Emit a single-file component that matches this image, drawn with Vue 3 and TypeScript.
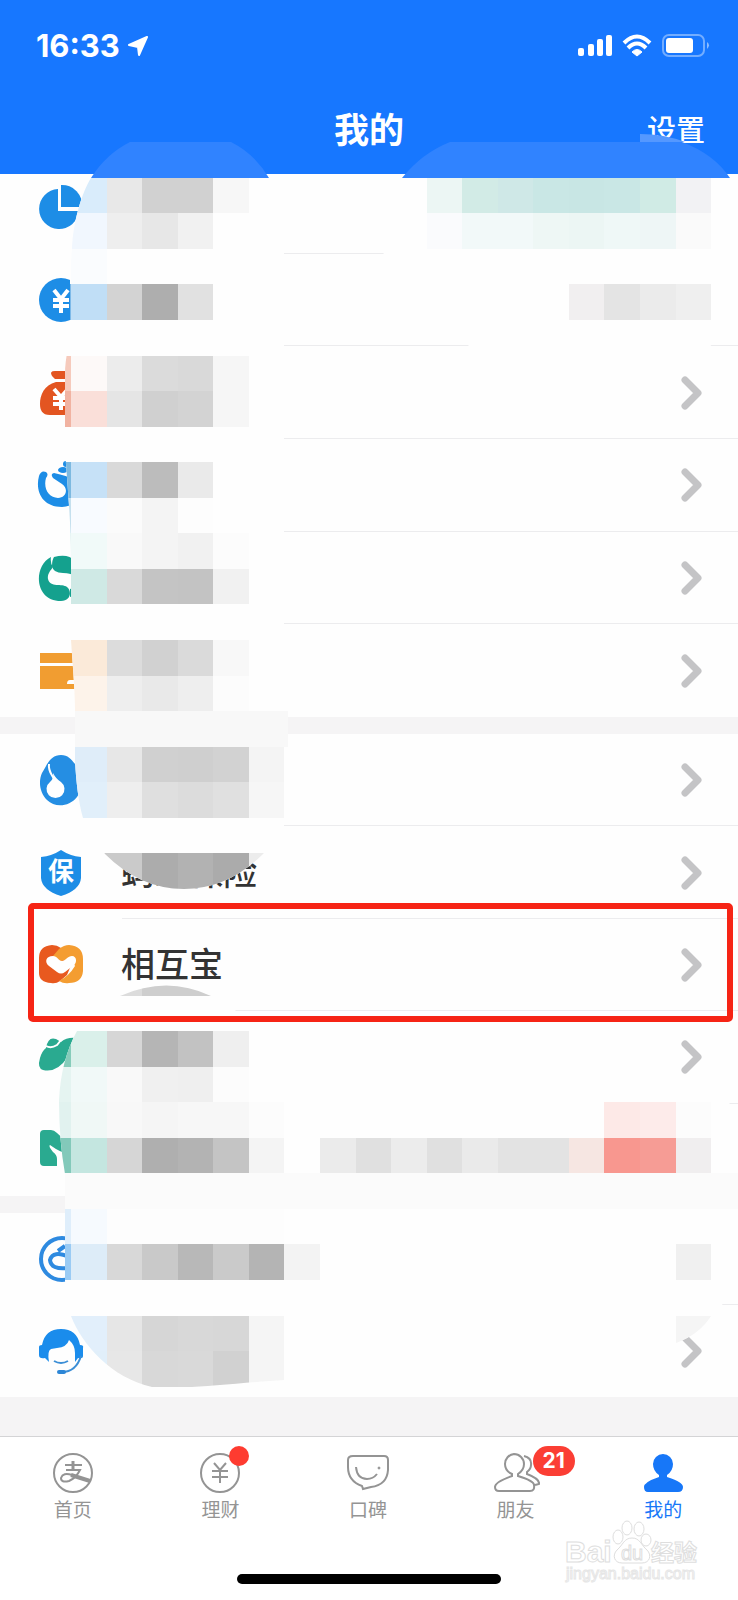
<script setup lang="ts">
interface Item {
  icon: string
  label: string
  chevron: boolean
  highlight?: boolean
}

const groups: { id: string; items: Item[] }[] = [
  {
    id: 'assets',
    items: [
      { icon: 'pie', label: '', chevron: false },
      { icon: 'coin', label: '', chevron: false },
      { icon: 'bag', label: '', chevron: true },
      { icon: 'swirl', label: '', chevron: true },
      { icon: 'sesame', label: '', chevron: true },
      { icon: 'card', label: '', chevron: true },
    ],
  },
  {
    id: 'services',
    items: [
      { icon: 'drop', label: '', chevron: true },
      { icon: 'shield', label: '蚂蚁保险', chevron: true },
      { icon: 'mutual', label: '相互宝', chevron: true, highlight: true },
      { icon: 'leaf', label: '', chevron: true },
      { icon: 'shop', label: '', chevron: false },
    ],
  },
  {
    id: 'support',
    items: [
      { icon: 'at', label: '', chevron: false },
      { icon: 'headset', label: '', chevron: true },
    ],
  },
]

const tabs = [
  { icon: 'home', label: '首页', badge: '' },
  { icon: 'wealth', label: '理财', badge: 'dot' },
  { icon: 'koubei', label: '口碑', badge: '' },
  { icon: 'friends', label: '朋友', badge: '21' },
  { icon: 'me', label: '我的', badge: '' },
]

// Mosaic tiles: 45 rows over the height of the page, each line is [row, first column, colours...]
const unit = 320 / 9
type Line = [number, number, ...string[]]

const leftTiles: Line[] = [
  [5, 2, '#d9ecfb', '#e8e8e8', '#d1d1d1', '#d1d1d1', '#f7f7f7'],
  [6, 2, '#f1f7fe', '#eeeeee', '#e7e7e7', '#f1f1f1'],
  [7, 2, '#fafcfe'],
  [8, 1, '#7db9e8', '#c0def6', '#d3d3d3', '#aeaeae', '#e1e1e1'],
  [10, 1, '#f6cabc', '#fdf9f8', '#ececec', '#dbdbdb', '#d9d9d9', '#f6f6f6'],
  [11, 1, '#f1b3a2', '#fadfd9', '#e5e5e5', '#d0d0d0', '#d3d3d3', '#f6f6f6'],
  [13, 1, '#7db9e0', '#c6e1f7', '#d9d9d9', '#bcbcbc', '#eaeaea'],
  [14, 1, '#c5e0ee', '#f8fbff', '#fbfbfb', '#f4f4f4', '#fdfdfd'],
  [15, 1, '#d0ebea', '#f1faf9', '#f9f9f9', '#f4f4f4', '#f1f1f1', '#fcfcfc'],
  [16, 2, '#cfe9e5', '#d9d9d9', '#c4c4c4', '#c3c3c3', '#f1f1f1'],
  [18, 2, '#fbead9', '#dcdcdc', '#d1d1d1', '#dadada', '#f8f8f8'],
  [19, 2, '#fdf3ea', '#eeeeee', '#e9e9e9', '#eeeeee', '#fcfcfc'],
  [20, 2, '#f8f8f8', '#f8f8f8', '#f8f8f8', '#f8f8f8', '#f8f8f8', '#f8f8f8', '#f8f8f8'],
  [21, 2, '#dfedf9', '#e7e7e7', '#d0d0d0', '#cfcfcf', '#d2d2d2', '#f4f4f4'],
  [22, 2, '#e1effa', '#eeeeee', '#dfdfdf', '#dcdcdc', '#e0e0e0', '#f6f6f6'],
  [24, 2, '#cacaca', '#cacaca', '#acacac', '#b2b2b2', '#ababab', '#ececec'],
]

const rightTiles: Line[] = [
  [5, 12, '#ecf6f4', '#d2ebe6', '#cfe8e7', '#c9e7e5', '#c8e6e4', '#c9e7e5', '#d0ebe5', '#f2f2f4'],
  [6, 12, '#fafbfd', '#f2f9f9', '#f2f9f9', '#eef7f5', '#ecf6f4', '#eff8f7', '#eef6f6', '#fafafa'],
  [8, 16, '#f1eff0', '#e4e4e4', '#ebebeb', '#efefef'],
]

const lowerTiles: Line[] = [
  [27, 3, '#dcdcdc', '#cecece', '#cecece'],
  [29, 1, '#86ccba', '#daf0ea', '#d6d6d6', '#b5b5b5', '#c2c2c2', '#efefef'],
  [30, 1, '#e5f4f1', '#f1f9f8', '#f9f9f9', '#f0f0f0', '#efefef', '#fcfcfc'],
  [31, 1, '#e1f2ef', '#f0f8f6', '#f8f8f8', '#f5f5f5', '#f7f7f7', '#f7f7f7', '#fcfcfc'],
  [31, 17, '#fde9e7', '#fdebea', '#fcfcfc'],
  [32, 1, '#83c9ba', '#c4e6e0', '#d6d6d6', '#afafaf', '#b3b3b3', '#c4c4c4', '#f4f4f4'],
  [32, 9, '#ebebeb', '#e0e0e0', '#ececec', '#e0e0e0', '#eaeaea', '#e3e3e3', '#e3e3e3', '#f6e6e2', '#f8978f', '#f69c95', '#f0eeef'],
  [33, 1, ...Array<string>(20).fill('#fbfbfb')],
  [34, 1, '#dfeefb', '#f6fafe', '#fdfdfd', '#fdfdfd', '#fdfdfd', '#fdfdfd', '#fdfdfd'],
  [35, 1, '#9acbf4', '#ddecf8', '#d8d8d8', '#c9c9c9', '#b8b8b8', '#cacaca', '#b4b4b4', '#f3f3f3'],
  [35, 19, '#f0f0f0'],
  [37, 2, '#e2effb', '#e6e6e6', '#d6d6d6', '#d8d8d8', '#d7d7d7', '#f5f5f5'],
  [37, 19, '#f5f5f5'],
  [38, 2, '#e1effa', '#e7e7e7', '#d8d8d8', '#d9d9d9', '#d1d1d1', '#f5f5f5'],
]

const expand = (lines: Line[]) =>
  lines.flatMap(([row, col, ...fills]) => fills.map((fill, i) => ({ x: col + i, y: row, fill })))

const patches = [
  {
    id: 'left',
    tiles: expand(leftTiles),
    outline:
      'M91 178C82 192 73 222 72 249L70 275V330C70 345 65 355 65 375V450C67 480 71 520 71 560V640C73 670 75 690 75 711V760C76 780 78 800 83 818L105 854Q140 889 184 889Q228 889 263 854L284 828V747H288V711H284V178Z',
  },
  {
    id: 'right',
    tiles: expand(rightTiles),
    outline: 'M402 178H738V320L704 352H474L468 345Q420 335 400 300L382 249Z',
  },
  {
    id: 'lower',
    tiles: expand(lowerTiles),
    outline:
      'M120 996Q167 975 211 996L235 1010L284 1067H660L676 1075Q710 1081 730 1104L738 1150V1216L722 1306L711 1316Q700 1334 676 1343H284V1380C250 1382 200 1388 180 1387H152C112 1378 82 1345 71 1316Q65 1300 65 1280V1174Q59 1140 59 1100Q61 1060 77 1031Z',
  },
]
</script>

<template>
  <div class="screen">
    <header class="top">
      <div class="status">
        <span class="clock">
          <time>16:33</time>
          <svg width="20" height="20" viewBox="0 0 20 20" aria-hidden="true"><path d="M19 1L1 9L10 11L11 19Z" fill="#fff" stroke="#fff" stroke-width="2" stroke-linejoin="round" /></svg>
        </span>
        <svg width="132" height="24" viewBox="0 0 132 24" aria-hidden="true">
          <g fill="#fff">
            <rect x="0" y="14" width="6" height="8" rx="2" />
            <rect x="10" y="10" width="6" height="12" rx="2" />
            <rect x="19" y="5" width="6" height="17" rx="2" />
            <rect x="28" y="1" width="6" height="21" rx="2" />
            <path d="M59 22L54 18Q59 13 64 18Z" stroke="#fff" stroke-linejoin="round" />
          </g>
          <g fill="none" stroke="#fff" stroke-width="4">
            <path d="M46 9Q59 -4 72 9" />
            <path d="M50 14Q59 5 68 14" />
          </g>
          <rect x="85" y="1" width="41" height="21" rx="6" fill="none" stroke="#fff" stroke-opacity=".4" stroke-width="2" />
          <rect x="88" y="4" width="27" height="15" rx="3" fill="#fff" />
          <path d="M129 8Q133 11 129 15Z" fill="#fff" fill-opacity=".5" />
        </svg>
      </div>
      <div class="titlebar">
        <h1>我的</h1>
        <button type="button" class="settings">设置</button>
      </div>
    </header>

    <main class="content">
      <ul v-for="group in groups" :key="group.id" class="group" :class="group.id">
        <li v-for="item in group.items" :key="item.icon" class="row">
          <svg class="icon" viewBox="0 0 48 52" aria-hidden="true">
            <g v-if="item.icon === 'pie'" fill="#1d8de6">
              <path d="M21 8A20 20 0 1 0 42 30H21Z" />
              <path d="M24 4A20 20 0 0 1 45 26H24Z" />
            </g>
            <g v-else-if="item.icon === 'coin'">
              <circle cx="24" cy="26" r="22" fill="#1d8de6" />
              <path d="M17 16L24 25L31 16M16 26H32M16 32H32M24 25V39" fill="none" stroke="#fff" stroke-width="4" />
            </g>
            <g v-else-if="item.icon === 'bag'">
              <path d="M18 4H30Q34 4 33 8L30 12H18L15 9Q12 4 18 4ZM19 15H30C42 17 45 31 45 36C45 44 41 48 33 48H13C5 48 3 43 3 37C3 28 7 18 19 15Z" fill="#e35521" />
              <path d="M17 22L24 30L31 22M16 31H32M16 37H32M24 29V43" fill="none" stroke="#fff" stroke-width="4" />
            </g>
            <g v-else-if="item.icon === 'swirl'" fill="#1d8de6">
              <path d="M2 17Q4 11 9 13Q12 15 9 19C6 30 12 39 21 39C29 39 32 30 25 25L16 19Q13 15 17 14Q30 17 37 20C49 27 42 48 25 48C5 48 -2 32 2 17Z" />
              <ellipse cx="26" cy="11" rx="5" ry="3" />
              <circle cx="29" cy="5" r="3" />
            </g>
            <g v-else-if="item.icon === 'sesame'" fill="#14a18e">
              <path d="M14 5C-4 14 -3 49 24 49C34 49 35 39 30 35C25 31 13 36 11 27C10 22 14 18 16 15Q13 11 14 5Z" />
              <path d="M17 5Q31 1 38 9L40 25Q34 21 26 21Q16 21 15 14Q15 8 17 5Z" />
              <path d="M33 37L40 35V43L33 45Z" />
            </g>
            <path v-else-if="item.icon === 'card'" d="M3 8H45V18H3ZM3 21H45V35H33Q30 35 30 39H45V44H3Z" fill="#f19d31" />
            <g v-else-if="item.icon === 'drop'">
              <path d="M24 1C31 1 34 5 38 10C48 21 46 35 40 43C32 53 18 54 10 46C3 39 1 28 5 19C10 11 13 1 24 1Z" fill="#258ee3" />
              <path d="M12 10C11 18 15 20 18 27" fill="none" stroke="#fff" stroke-width="2" />
              <path d="M16 19Q19 25 24 28A9 9 0 1 1 13 28Q17 25 16 19Z" fill="#fff" />
            </g>
            <g v-else-if="item.icon === 'shield'">
              <path d="M24 3Q33 9 44 10V31Q43 43 24 49Q5 43 4 31V10Q15 9 24 3Z" fill="#1d8de6" />
              <text x="24" y="34" text-anchor="middle" font-size="26" fill="#fff" class="glyph">保</text>
            </g>
            <g v-else-if="item.icon === 'mutual'">
              <path d="M15 6Q20 6 24 9L35 24L30 36L23 42Q19 45 14 44Q2 43 2 34V19Q2 7 15 6Z" fill="#e8591f" />
              <path d="M32 6Q46 7 46 20V32Q45 44 32 44Q27 45 22 42Q32 37 38 27L35 20L24 22L16 17L22 10Q27 6 32 6Z" fill="#f49d31" />
              <path d="M16 17C20 17 22 22 25 22C28 22 31 17 35 17C40 17 40 24 37 26L28 33Q24 36 20 33L12 27C7 23 9 17 16 17Z" fill="#fff" />
            </g>
            <g v-else-if="item.icon === 'leaf'">
              <path d="M9 17Q11 5 19 8L24 11Q30 6 39 7L30 27Q20 42 6 39Q0 37 3 27Q5 20 9 17Z" fill="#2aaa90" />
              <path d="M9 15Q14 18 20 14L24 9" fill="none" stroke="#fff" stroke-width="2" />
            </g>
            <path v-else-if="item.icon === 'shop'" d="M7 6H14Q17 6 20 9L32 20V30Q24 29 13 21Q11 22 16 28Q20 31 20 35V42H7Q3 42 3 38V10Q3 6 7 6Z" fill="#2aaa90" />
            <g v-else-if="item.icon === 'at'" fill="none" stroke="#2e8ae0" stroke-width="4">
              <circle cx="25" cy="26" r="21" />
              <path d="M21 18L28 13M32 24Q16 17 13 27Q14 37 31 35" />
            </g>
            <g v-else>
              <path d="M5 20Q8 4 24 4Q40 4 43 20Q47 20 46 23V31Q46 34 41 33L38 37V28Q38 20 32 15Q30 22 20 23L14 24Q10 26 12 37L8 33Q2 34 2 30V22Q2 20 5 20Z" fill="#1a8cec" />
              <path d="M17 36Q24 40 31 36M44 31Q39 47 25 47" fill="none" stroke="#3b8ed6" stroke-width="2" />
              <rect x="20" y="45" width="9" height="4" rx="2" fill="#2c86d6" />
            </g>
          </svg>
          <span class="label">{{ item.label }}</span>
          <svg v-if="item.chevron" class="chevron" viewBox="0 0 22 36" aria-hidden="true">
            <path d="M4 5L17 18L4 31" fill="none" stroke="#c4c4c6" stroke-width="7" stroke-linecap="round" stroke-linejoin="round" />
          </svg>
          <span v-if="item.highlight" class="highlight"></span>
        </li>
      </ul>
    </main>

    <nav class="tabs">
      <a v-for="tab in tabs" :key="tab.icon" href="#" class="tab" :class="{ active: tab.icon === 'me' }">
        <span class="tabicon">
          <svg width="48" height="44" viewBox="0 0 48 44" fill="none" stroke="currentColor" stroke-width="2" aria-hidden="true">
            <g v-if="tab.icon === 'home'">
              <circle cx="24" cy="22" r="19" />
              <path d="M16 14H33" stroke-width="2" />
              <path d="M24 10V19" stroke-width="3" />
              <path d="M17 19H31Q27 27 20 30Q12 32 12 27Q14 21 23 24" stroke-width="2" />
              <path d="M22 24L41 30" stroke-width="4" />
            </g>
            <g v-else-if="tab.icon === 'wealth'">
              <circle cx="24" cy="22" r="19" />
              <path d="M18 12L24 19L30 12M16 20H32M16 26H32M24 19V32" />
            </g>
            <g v-else-if="tab.icon === 'koubei'">
              <path d="M9 5H40Q44 5 44 9V19Q43 34 27 36L19 38L18 35Q4 30 4 16V9Q4 5 9 5Z" />
              <path d="M12 16Q13 28 23 28Q29 28 33 23" />
              <circle cx="35" cy="17" r="1" fill="currentColor" stroke-width="1" />
            </g>
            <g v-else-if="tab.icon === 'friends'">
              <path d="M22 3A10 10 0 0 1 32 13Q32 19 26 23V25Q42 30 42 34Q43 40 38 40H7Q3 40 3 36Q3 31 20 25V23Q13 20 13 13A10 10 0 0 1 22 3Z" />
              <path d="M32 5Q40 7 39 14Q39 18 35 21V23Q48 28 47 33L43 34" />
            </g>
            <path v-else d="M24 3A10 10 0 0 1 34 13Q34 20 28 24V26Q44 31 44 36Q44 41 39 41H9Q5 41 5 36Q5 31 20 26V24Q14 20 14 13A10 10 0 0 1 24 3Z" fill="currentColor" stroke="none" />
          </svg>
          <span v-if="tab.badge === 'dot'" class="dot"></span>
          <span v-else-if="tab.badge" class="count">{{ tab.badge }}</span>
        </span>
        <span>{{ tab.label }}</span>
      </a>
    </nav>
    <div class="homebar"></div>

    <svg class="mosaic" viewBox="0 0 738 1600" preserveAspectRatio="none" aria-hidden="true">
      <defs>
        <clipPath v-for="patch in patches" :id="patch.id" :key="patch.id"><path :d="patch.outline" /></clipPath>
      </defs>
      <g fill="#3083ff">
        <path d="M91 178Q106 154 130 142H231Q255 154 269 178Z" />
        <path d="M402 178Q422 153 450 142H682Q714 154 730 178Z" />
      </g>
      <path d="M640 134Q664 134 685 142H640Z" fill="#5598ff" />
      <g v-for="patch in patches" :key="patch.id" :clip-path="`url(#${patch.id})`">
        <rect y="178" width="738" height="1222" fill="#fefefe" />
        <g :transform="`scale(${unit})`" shape-rendering="crispEdges">
          <rect v-for="tile in patch.tiles" :key="`${tile.x}-${tile.y}`" :x="tile.x" :y="tile.y" width="1" height="1" :fill="tile.fill" />
        </g>
      </g>
    </svg>

    <svg class="watermark" width="140" height="68" viewBox="0 0 140 68" aria-hidden="true">
      <g fill="#fff" stroke="#dedede" stroke-width="1">
        <text x="1" y="44" font-size="30" font-weight="700">Bai</text>
        <ellipse cx="54" cy="19" rx="5" ry="7" />
        <ellipse cx="63" cy="10" rx="5" ry="7" />
        <ellipse cx="75" cy="11" rx="5" ry="7" />
        <ellipse cx="82" cy="22" rx="5" ry="6" />
        <path d="M68 20C76 20 77 27 83 32C88 37 86 45 78 45H58C50 45 48 37 53 32C59 27 60 20 68 20Z" />
        <text x="57" y="42" font-size="20">du</text>
        <text x="87" y="43" font-size="23" font-weight="700">经验</text>
        <text x="2" y="61" font-size="16" stroke="#e6e6e6">jingyan.baidu.com</text>
      </g>
    </svg>
  </div>
</template>

<style>
body {
  margin: 0;
}
</style>

<style scoped>
.screen {
  position: relative;
  min-height: 100vh;
  background: #fff;
  color: #333;
  font-family: "Liberation Sans", "Noto Sans CJK SC", sans-serif;
  overflow: hidden;
}
.top {
  position: relative;
  z-index: 1;
  height: 174px;
  background: #1777ff;
  color: #fff;
}
.status {
  display: flex;
  align-items: center;
  justify-content: space-between;
  height: 91px;
  padding: 0 28px 0 36px;
}
.clock {
  display: flex;
  align-items: center;
  gap: 8px;
  font: 700 31px/36px Inter, sans-serif;
}
.titlebar {
  display: grid;
  grid-template-columns: 1fr auto 1fr;
  align-items: center;
  height: 80px;
  padding: 0 33px;
}
h1 {
  grid-column: 2;
  margin: 0;
  font-size: 35px;
  line-height: 52px;
  font-weight: 700;
}
.settings {
  justify-self: end;
  padding: 0;
  border: 0;
  background: none;
  color: inherit;
  font: inherit;
  font-size: 29px;
  font-weight: 500;
  line-height: 44px;
}
.content {
  display: flex;
  flex-direction: column;
  gap: 17px;
  margin-top: -13px;
  padding-bottom: 39px;
  background: #f5f4f5;
}
.group {
  display: grid;
  grid-auto-rows: 1fr;
  min-height: 556px;
  margin: 0;
  padding: 0;
  background: #fefefe;
  list-style: none;
}
.services {
  min-height: 462px;
}
.support {
  min-height: 184px;
}
.row {
  position: relative;
  display: flex;
  align-items: center;
  padding: 0 35px 0 37px;
}
.row:not(:last-child)::after {
  content: "";
  position: absolute;
  right: 0;
  bottom: 0;
  left: 122px;
  height: 1px;
  background: #ececee;
}
.icon {
  width: 48px;
  height: 52px;
}
.glyph {
  font-weight: 700;
}
.label {
  flex: 1;
  margin-left: 36px;
  font-size: 34px;
  line-height: 48px;
  font-weight: 500;
}
.chevron {
  width: 22px;
  height: 36px;
}
.highlight {
  position: absolute;
  z-index: 2;
  inset: -16px 5px -11px 28px;
  border: 6px solid #f62415;
  border-radius: 5px;
}
.tabs {
  display: flex;
  height: 138px;
  border-top: 1px solid #d4d4d6;
  box-sizing: border-box;
}
.tab {
  display: flex;
  flex: 1;
  flex-direction: column;
  align-items: center;
  gap: 2px;
  padding: 14px 2px 0 0;
  color: #949494;
  font-size: 19px;
  line-height: 28px;
  text-decoration: none;
}
.active {
  color: #1777f8;
}
.tabicon {
  position: relative;
  display: flex;
}
.dot {
  position: absolute;
  top: -5px;
  right: -5px;
  width: 20px;
  height: 20px;
  border-radius: 50%;
  background: #fe3b30;
}
.count {
  position: absolute;
  top: -5px;
  left: 41px;
  width: 42px;
  border-radius: 15px;
  background: #fb3e34;
  color: #fff;
  font: 700 21px/30px Inter, sans-serif;
  text-align: center;
}
.homebar {
  width: 264px;
  height: 10px;
  margin: 0 auto 16px;
  border-radius: 5px;
  background: #000;
}
.mosaic {
  position: absolute;
  z-index: 1;
  inset: 0;
  width: 100%;
  height: 100%;
  pointer-events: none;
}
.watermark {
  position: absolute;
  right: 34px;
  bottom: 14px;
}
</style>
